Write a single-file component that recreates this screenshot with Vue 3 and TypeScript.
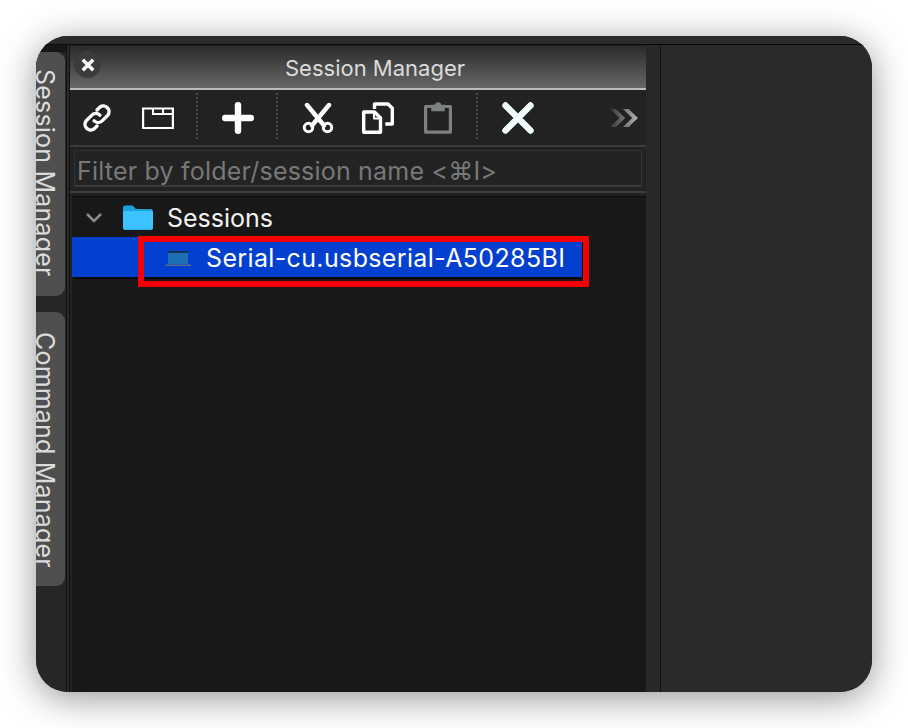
<script setup lang="ts">
const tabs: { label: string; cls: string }[] = [
  { label: 'Session Manager', cls: 'tab-session' },
  { label: 'Command Manager', cls: 'tab-command' },
]
</script>

<template>
  <div class="page">
    <div class="window">
      <div class="topbar"></div>
      <div class="body">
        <aside class="rail">
          <div v-for="t in tabs" :key="t.label" class="tab" :class="t.cls">
            <span class="tab-text">{{ t.label }}</span>
          </div>
        </aside>
        <section class="panel">
          <header class="title">
            <span class="close">
              <svg width="14" height="14" viewBox="0 0 14 14"><path d="M3 3l8 8M11 3l-8 8" stroke="#fff" stroke-width="3.4" stroke-linecap="square" /></svg>
            </span>
            <span class="title-text">Session Manager</span>
          </header>
          <div class="toolbar">
            <svg class="ic ic-link" width="32" height="32" viewBox="2 2 28 28" fill="none" stroke="#fff" stroke-width="3" stroke-linecap="round" stroke-linejoin="round">
              <path d="M13.5 18.5a5 5 0 0 0 7 0l5-5a5 5 0 0 0-7-7l-2.500 2.500" />
              <path d="M18.5 13.5a5 5 0 0 0-7 0l-5 5a5 5 0 0 0 7 7l2.500-2.500" />
            </svg>
            <svg class="ic ic-win" width="32" height="24" viewBox="0 0 32 24" fill="none" stroke="#fff" stroke-width="2.200">
              <path d="M1.100 2.500h29.800v19.500H1.100z" />
              <path d="M11 2.500v5.500h20M21 2.500v5.500" stroke-width="2" />
            </svg>
            <span class="dots d1"></span>
            <svg class="ic ic-plus" width="32" height="32" viewBox="0 0 32 32" fill="none" stroke="#fff" stroke-width="6.400" stroke-linecap="round">
              <path d="M16 3.200v25.600M3.200 16h25.600" />
            </svg>
            <span class="dots d2"></span>
            <svg class="ic ic-cut" width="32" height="32" viewBox="0 0 32 32" fill="none" stroke="#fff">
              <path d="M5 3l17 20.500M27 3L10 23.500" stroke-width="4.400" stroke-linecap="round" />
              <circle cx="6.500" cy="25.500" r="4.200" stroke-width="3" />
              <circle cx="25.500" cy="25.500" r="4.200" stroke-width="3" />
            </svg>
            <svg class="ic ic-copy" width="32" height="32" viewBox="0 0 32 32" fill="none" stroke="#fff" stroke-width="3.400" stroke-linejoin="round">
              <path d="M12.500 7V2h13.500l4.300 4.300V22h-7" />
              <path d="M1.700 10h10.800l6 6v14.300H1.700z" />
              <path d="M12 10v6.500h6.500" stroke-width="2" />
            </svg>
            <svg class="ic ic-paste" width="30" height="32" viewBox="0 0 30 32" fill="none" stroke="#7d8080" stroke-width="3.200">
              <path d="M9 4.500H2.600v25.700h24.800V4.500H21" stroke-linejoin="round" />
              <path d="M9 8.500V3.500h3.500a2.500 2.500 0 0 1 5 0H21v5z" fill="#7d8080" stroke-width="1.500" />
            </svg>
            <span class="dots d3"></span>
            <svg class="ic ic-x" width="32" height="32" viewBox="0 0 32 32" fill="none" stroke="#f6ffff" stroke-width="6.400" stroke-linecap="round">
              <path d="M3.500 3.500l25 25M28.500 3.500l-25 25" />
            </svg>
            <svg class="ic ic-more" width="28" height="18" viewBox="2 2 24 16" preserveAspectRatio="none" fill="none">
              <defs>
                <linearGradient id="fade" x1="0" x2="1" y1="0" y2="0">
                  <stop offset="0" stop-color="#333" />
                  <stop offset="1" stop-color="#b4b4b4" />
                </linearGradient>
              </defs>
              <path d="M2 2l8 8-8 8h5l8-8-8-8zM13 2l8 8-8 8h5l8-8-8-8z" fill="url(#fade)" />
            </svg>
          </div>
          <div class="filter-wrap">
            <div class="filter">Filter by folder/session name &lt;⌘I&gt;</div>
          </div>
          <div class="tree">
            <div class="row row-folder">
              <svg class="chev" width="18" height="11" viewBox="0 0 18 11" fill="none" stroke="#8a8a8a" stroke-width="2.600">
                <path d="M2 2l7 7 7-7" />
              </svg>
              <svg class="folder" width="30" height="25" viewBox="0 0 30 25">
                <path d="M0 3a2.500 2.500 0 0 1 2.500-2.500h7L13 4h14.500A2.500 2.500 0 0 1 30 6.500v16a2.500 2.500 0 0 1-2.500 2.500h-25A2.500 2.500 0 0 1 0 22.500z" fill="#1ba2dc" />
                <path d="M0 7.500a1.500 1.500 0 0 1 1.500-1.500h27A1.500 1.500 0 0 1 30 7.500v15a2 2 0 0 1-2 2H2a2 2 0 0 1-2-2z" fill="#3cc2ff" />
              </svg>
              <span class="row-text">Sessions</span>
            </div>
            <div class="row row-session">
              <svg class="laptop" width="26" height="16" viewBox="0 0 26 16">
                <path d="M3 1.500A1 1 0 0 1 4 .5h18a1 1 0 0 1 1 1V13H3z" fill="#1f6fb4" />
                <path d="M3 1A1 1 0 0 1 4 0h18a1 1 0 0 1 1 1v1H3z" fill="#16304f" />
                <path d="M0 13.500h26V15H1z" fill="#5d6f86" />
              </svg>
              <span class="row-text">Serial-cu.usbserial-A50285BI</span>
            </div>
            <div class="marker"></div>
          </div>
        </section>
        <div class="gutter"></div>
        <div class="main"></div>
      </div>
    </div>
  </div>
</template>

<style scoped>
.page {
  width: 908px;
  height: 728px;
  box-sizing: border-box;
  padding: 36px;
  background: #fff;
  font-family: Inter, "Liberation Sans", sans-serif;
}
.window {
  width: 836px;
  height: 656px;
  border-radius: 32px;
  overflow: hidden;
  display: flex;
  flex-direction: column;
  background: #2a2a2a;
  box-shadow: 0 6px 36px rgba(0, 0, 0, 0.42);
}
.topbar {
  height: 8px;
  flex: none;
  background: #2a2a2a;
  border-bottom: 1px solid #0a0a0a;
}
.body {
  flex: 1;
  min-height: 0;
  display: flex;
}
.rail {
  width: 31px;
  flex: none;
  box-sizing: border-box;
  padding-top: 7px;
  display: flex;
  flex-direction: column;
  gap: 16px;
  background: linear-gradient(to bottom, #171717 0, #171717 7px, #262626 7px);
  border-right: 1px solid #101010;
}
.tab {
  width: 29px;
  box-sizing: border-box;
  border-radius: 0 9px 9px 0;
  background: #4f4f4f;
  display: flex;
  justify-content: flex-start;
  padding-top: 17px;
  overflow: hidden;
}
.tab-session {
  height: 244px;
}
.tab-command {
  height: 274px;
  padding-top: 20px;
}
.tab-text {
  writing-mode: vertical-rl;
  font-size: 25px;
  line-height: 18px;
  letter-spacing: 0.2px;
  color: #dcdcdc;
  white-space: nowrap;
}
.panel {
  width: 577px;
  flex: none;
  box-sizing: border-box;
  margin-left: 2px;
  display: flex;
  flex-direction: column;
  position: relative;
  background: #222;
  border-left: 1px solid #101010;
}
.title {
  height: 42px;
  flex: none;
  margin-top: 1px;
  display: flex;
  align-items: center;
  justify-content: center;
  position: relative;
  padding-left: 34px;
  background: linear-gradient(to bottom, #2b2b2b, #676767);
  border-bottom: 2px solid #bdbdbd;
}
.close {
  position: absolute;
  left: 4px;
  top: 5px;
  width: 27px;
  height: 27px;
  border-radius: 50%;
  background: #3c3c3c;
  display: flex;
  align-items: center;
  justify-content: center;
}
.title-text {
  font-size: 22px;
  color: #dcdcdc;
  padding-top: 1px;
}
.toolbar {
  height: 55px;
  flex: none;
  position: relative;
  display: flex;
  align-items: center;
  background: #222;
}
.ic {
  flex: none;
}
.ic-link { margin-left: 11px; }
.ic-win { margin-left: 29px; }
.ic-plus { margin-left: 48px; }
.ic-cut { margin-left: 48px; }
.ic-copy { margin-left: 28px; }
.ic-paste { margin-left: 29px; }
.ic-x { margin-left: 49px; }
.ic-more { margin-left: 76px; filter: blur(0.4px); }
.dots {
  position: absolute;
  top: 3px;
  width: 0;
  height: 46px;
  border-left: 2px dotted #4a4a4a;
}
.d1 { left: 126px; }
.d2 { left: 206px; }
.d3 { left: 406px; }
.filter-wrap {
  height: 48px;
  flex: none;
  box-sizing: border-box;
  border-top: 2px solid #3c3c3c;
  border-bottom: 2px solid #3c3c3c;
  padding: 3px 4px 4px 4px;
  background: #222;
  margin-bottom: 3px;
}
.filter {
  height: 100%;
  box-sizing: border-box;
  padding: 5px 0 0 2px;
  display: flex;
  align-items: center;
  font-size: 25px;
  letter-spacing: 0.2px;
  color: #787878;
  background: #232323;
  border: 1px solid #333;
  border-bottom: 2px solid #3a3a3a;
}
.tree {
  flex: 1;
  position: relative;
  background: #181818;
  margin-left: 2px;
  border-top: 1px solid #0c0c0c;
}
.row {
  height: 40px;
  display: flex;
  align-items: center;
  font-size: 25px;
  color: #f2f2f2;
}
.row-text {
  padding-top: 2px;
}
.chev {
  margin-left: 13px;
}
.folder {
  margin-left: 20px;
}
.row-folder .row-text {
  margin-left: 14px;
}
.row-session {
  background: #0440d0;
  color: #fff;
  padding-left: 93px;
  margin-right: 64px;
  letter-spacing: 0.36px;
  box-shadow: 2px 2px 0 #0a0a0a;
}
.row-session .row-text {
  margin-left: 15px;
}
.laptop {
  margin-top: 4px;
}
.marker {
  position: absolute;
  left: 66px;
  top: 39px;
  width: 451px;
  height: 51px;
  box-sizing: border-box;
  border: 6px solid #f50000;
}
.gutter {
  width: 14px;
  flex: none;
  background: #282828;
  border-right: 1px solid #111;
}
.main {
  flex: 1;
  background: #2a2a2a;
}
</style>

<style>
html, body {
  margin: 0;
  background: #fff;
}
</style>
